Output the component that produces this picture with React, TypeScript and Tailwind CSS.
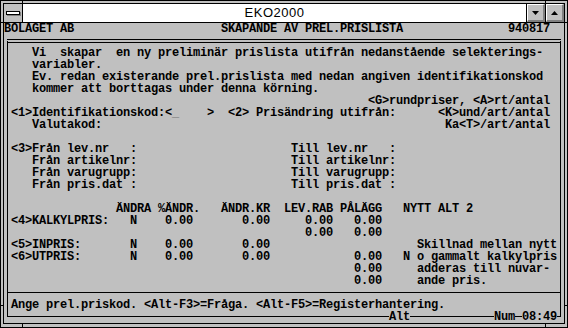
import React from 'react';

type Part = [number, string];

// lay text out on the 80-column terminal grid
const cols = (parts: Part[], start = 1) => {
  let s = '';
  for (const [c, t] of parts) s = s.padEnd(c - start) + t;
  return s;
};

const upper: Part[][] = [
  [[4, 'Vi  skapar  en ny preliminär prislista utifrån nedanstående selekterings-']],
  [[4, 'variabler.']],
  [[4, 'Ev. redan existerande prel.prislista med nedan angiven identifikationskod']],
  [[4, 'kommer att borttagas under denna körning.']],
  [[52, '<G>rundpriser, <A>rt/antal']],
];

const lower: Part[][] = [
  [[4, 'Valutakod:'], [63, 'Ka<T>/art/antal']],
  [],
  [[1, '<3>Från lev.nr   :'], [41, 'Till lev.nr   :']],
  [[4, 'Från artikelnr:'], [41, 'Till artikelnr:']],
  [[4, 'Från varugrupp:'], [41, 'Till varugrupp:']],
  [[4, 'Från pris.dat :'], [41, 'Till pris.dat :']],
  [],
  [[16, 'ÄNDRA'], [22, '%ÄNDR.'], [31, 'ÄNDR.KR'], [40, 'LEV.RAB'], [48, 'PÅLÄGG'], [57, 'NYTT ALT 2']],
  [[1, '<4>KALKYLPRIS:'], [18, 'N'], [23, '0.00'], [34, '0.00'], [43, '0.00'], [50, '0.00']],
  [[43, '0.00'], [50, '0.00']],
  [[1, '<5>INPRIS:'], [18, 'N'], [23, '0.00'], [34, '0.00'], [59, 'Skillnad mellan nytt']],
  [[1, '<6>UTPRIS:'], [18, 'N'], [23, '0.00'], [34, '0.00'], [50, '0.00'], [57, 'N o gammalt kalkylpris']],
  [[50, '0.00'], [59, 'adderas till nuvar-']],
  [[50, '0.00'], [59, 'ande pris.']],
];

function Line({ children }: { children?: React.ReactNode }) {
  return <div className="h-[12px] pl-[3px] whitespace-pre">{children}</div>;
}

function Arrow({ up }: { up?: boolean }) {
  return (
    <svg width="7" height="4" viewBox="0 0 7 4">
      <polygon points={up ? '3.5,0 7,4 0,4' : '0,0 7,0 3.5,4'} fill="#000" />
    </svg>
  );
}

function CaptionButton({ up }: { up?: boolean }) {
  return (
    <div className="w-[19px] border-l border-black bg-[#c0c0c0]">
      <div className="h-full flex items-center justify-center border-t border-l border-t-white border-l-white border-b-2 border-r-2 border-b-[#808080] border-r-[#808080]">
        <Arrow up={up} />
      </div>
    </div>
  );
}

export default function App() {
  return (
    <div className="relative w-[568px] h-[328px] bg-[#c0c0c0] border border-black px-[2px] pt-[2px] pb-[3px]">
      {/* sizing-frame corner ticks */}
      <div className="absolute left-[21px] top-0 w-px h-[3px] bg-black" />
      <div className="absolute left-[544px] top-0 w-px h-[3px] bg-black" />
      <div className="absolute left-[21px] bottom-0 w-px h-[4px] bg-black" />
      <div className="absolute left-[544px] bottom-0 w-px h-[4px] bg-black" />
      <div className="absolute left-0 top-[21px] w-[3px] h-px bg-black" />
      <div className="absolute right-0 top-[21px] w-[3px] h-px bg-black" />
      <div className="absolute left-0 top-[304px] w-[3px] h-px bg-black" />
      <div className="absolute right-0 top-[304px] w-[3px] h-px bg-black" />

      <div className="h-full border border-black flex flex-col">
        {/* title bar */}
        <div className="h-[19px] flex border-b border-black">
          <div className="w-[19px] border-r border-black bg-[#c0c0c0] flex items-center justify-center">
            <div className="w-[14px] h-[4px] bg-white border border-black shadow-[1px_1px_0_#808080]" />
          </div>
          <div className="flex-1 bg-white flex items-center justify-center font-['Liberation_Sans',Arial,sans-serif] text-[13px] tracking-[0.5px] text-black">
            EKO2000
          </div>
          <CaptionButton />
          <CaptionButton up />
        </div>

        {/* DOS screen */}
        <div className="h-[300px] bg-[#c0c0c0] text-black font-['Liberation_Mono','DejaVu_Sans_Mono',monospace] font-bold text-[12px] leading-[12px] tracking-[-0.2px]">
          <div className="h-[12px] whitespace-pre">
            {cols([[0, 'BOLAGET AB'], [31, 'SKAPANDE AV PREL.PRISLISTA'], [72, '940817']], 0)}
          </div>

          <div className="mx-[3px] mt-[4px] h-[272px] border-t-4 border-double border-x border-black pt-[4px]">
            {upper.map((r, i) => (
              <Line key={i}>{cols(r)}</Line>
            ))}
            <Line>
              {cols([[1, '<1>Identifikationskod:<']])}
              <span className="text-[#808080]">_</span>
              {cols([[29, '>'], [32, '<2> Prisändring utifrån:'], [62, '<K>und/art/antal']], 25)}
            </Line>
            {lower.map((r, i) => (
              <Line key={i}>{cols(r)}</Line>
            ))}
            <div className="h-[12px] pt-[5px]">
              <div className="h-px bg-black" />
            </div>
            <Line>{cols([[1, 'Ange prel.priskod. <Alt-F3>=Fråga. <Alt-F5>=Registerhantering.']])}</Line>
          </div>

          {/* bottom edge with status */}
          <div className="mx-[3px] h-[12px] flex items-start whitespace-pre">
            <div className="w-[382px] h-[6px] border-l border-b border-black" />
            <span className="w-[21px]">Alt</span>
            <div className="w-[84px] h-[6px] border-b border-black" />
            <span className="w-[21px]">Num</span>
            <div className="w-[7px] h-[6px] border-b border-black" />
            <span className="w-[35px]">08:49</span>
            <div className="w-[4px] h-[6px] border-b border-r border-black" />
          </div>
        </div>
      </div>
    </div>
  );
}
